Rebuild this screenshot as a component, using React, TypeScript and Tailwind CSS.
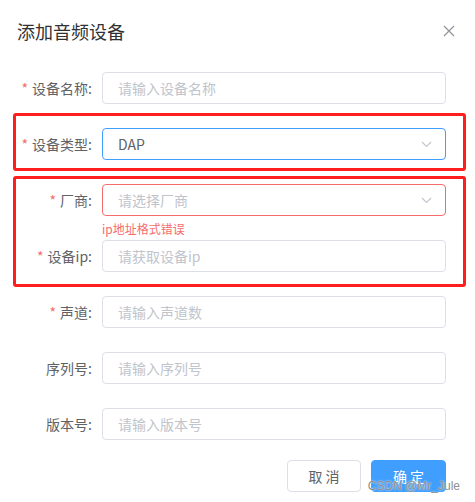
import React from 'react';

interface FieldProps {
  label: string;
  required?: boolean;
  placeholder?: string;
  value?: string;
  select?: boolean;
  state?: 'normal' | 'focus' | 'error';
  error?: string;
  last?: boolean;
}

const Chevron: React.FC = () => (
  <svg width="11" height="7" viewBox="0 0 11 7" className="shrink-0">
    <path d="M1 1 L5.5 5.5 L10 1" fill="none" stroke="#c0c4cc" strokeWidth="1.1" />
  </svg>
);

const Field: React.FC<FieldProps> = ({ label, required, placeholder, value, select, state = 'normal', error, last }) => {
  const border =
    state === 'focus' ? 'border-[#409eff]' : state === 'error' ? 'border-[#f56c6c]' : 'border-[#dcdfe6]';
  return (
    <div className={`flex items-center h-8 ${last ? '' : 'mb-6'}`}>
      <label className="w-[102px] shrink-0 pr-[10px] text-right text-[14px] text-[#606266]">
        {required && <span className="text-[#f56c6c] mr-[4px]">*</span>}
        {label}:
      </label>
      <div className="relative flex-1">
        <div className={`flex items-center h-8 rounded-[4px] border bg-white pl-[15px] pr-[13px] ${border}`}>
          <span className={`flex-1 text-[14px] ${value ? 'text-[#606266]' : 'text-[#c0c4cc]'}`}>
            {value ?? placeholder}
          </span>
          {select && <Chevron />}
        </div>
        {error && (
          <div className="absolute left-0 top-full pt-[7px] text-[12px] leading-[12px] text-[#f56c6c]">{error}</div>
        )}
      </div>
    </div>
  );
};

const App: React.FC = () => {
  return (
    <div
      className="relative w-[475px] h-[502px] bg-white overflow-hidden"
      style={{ fontFamily: '"Noto Sans CJK SC", "Noto Sans", sans-serif' }}
    >
      <div className="flex items-center justify-between pl-[17px] pr-[20px] pt-[18px]">
        <h2 className="text-[18px] leading-[26px] text-[#303133]">添加音频设备</h2>
        <svg width="12" height="12" viewBox="0 0 12 12">
          <path d="M1 1 L11 11 M11 1 L1 11" stroke="#909399" strokeWidth="1.2" />
        </svg>
      </div>

      <div className="mt-[28px] pr-[29px]">
        <Field label="设备名称" required placeholder="请输入设备名称" />
        <div className="relative">
          <Field label="设备类型" required value="DAP" select state="focus" />
          <div className="pointer-events-none absolute -top-[15px] left-[13px] -right-[20px] -bottom-[11px] rounded-[3px] border-[3px] border-[#ff1e1e]" />
        </div>
        <div className="relative">
          <Field label="厂商" required placeholder="请选择厂商" select state="error" error="ip地址格式错误" />
          <Field label="设备ip" required placeholder="请获取设备ip" />
          <div className="pointer-events-none absolute -top-[8px] left-[13px] -right-[20px] -bottom-[15px] rounded-[3px] border-[3px] border-[#ff1e1e]" />
        </div>
        <Field label="声道" required placeholder="请输入声道数" />
        <Field label="序列号" placeholder="请输入序列号" />
        <Field label="版本号" placeholder="请输入版本号" last />
      </div>

      <div className="mt-[20px] flex justify-end gap-[10px] pr-[29px]">
        <button className="w-[74px] h-8 rounded-[4px] border border-[#dcdfe6] bg-white text-[14px] text-[#606266]">
          取&nbsp;消
        </button>
        <button className="w-[75px] h-8 rounded-[4px] border border-[#409eff] bg-[#409eff] text-[14px] text-white">
          确&nbsp;定
        </button>
      </div>

      <div
        className="absolute right-[15px] bottom-[9px] text-[12px] leading-[14px] text-[#8f8f8f] [text-shadow:0_0_2px_#ffffff]"
        style={{ fontFamily: '"Liberation Sans", Arial, sans-serif' }}
      >
        CSDN @Mr_Jule
      </div>
    </div>
  );
};

export default App;
